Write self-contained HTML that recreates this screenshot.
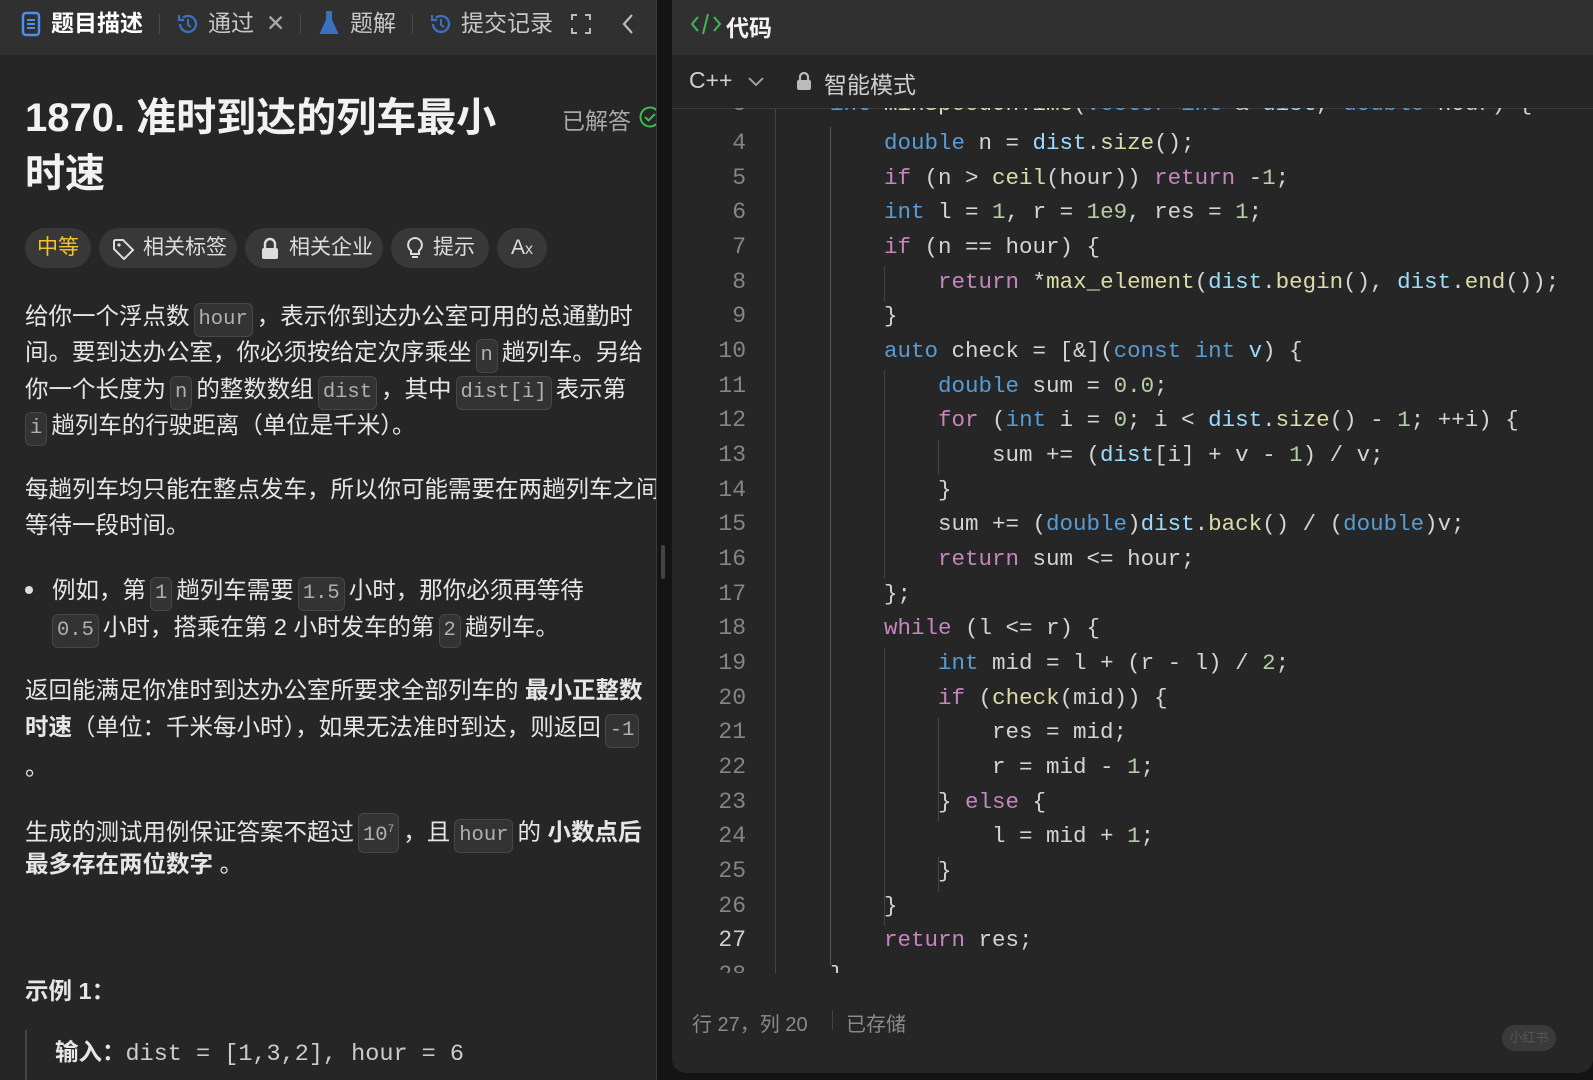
<!DOCTYPE html>
<html><head><meta charset="utf-8">
<style>
*{margin:0;padding:0;box-sizing:border-box}
body{width:1593px;height:1080px;background:#141414;overflow:hidden;position:relative;font-family:"Liberation Sans","Noto Sans CJK SC",sans-serif;color:#e8e8e8}
.abs{position:absolute;white-space:nowrap}
#left{position:absolute;left:0;top:0;width:657px;height:1080px;background:#262626;overflow:hidden;border-right:1px solid #3a3a3a}
#ltab{position:absolute;left:0;top:0;width:657px;height:55px;background:#303030}
.tab{position:absolute;top:9px;font-size:23px;color:#c8c8c8;line-height:28px}
.sep{position:absolute;top:14px;width:1px;height:20px;background:#4a4a4a}
.t{position:absolute;left:25px;font-size:23.5px;line-height:30px;color:#e6e6e6;white-space:nowrap}
.c{display:inline-block;font-family:"Liberation Mono",monospace;font-size:20.5px;color:#b0b0b0;background:#333;border:1px solid #474747;border-radius:6px;padding:0 4px;line-height:32px;margin:0 4px}
.pill{position:absolute;top:228px;height:40px;border-radius:20px;background:#383838;font-size:21px;color:#dcdcdc;line-height:40px;padding:0 14px;white-space:nowrap}
#right{position:absolute;left:672px;top:0;width:921px;height:1073px;background:#262626;border-radius:0 0 14px 14px;overflow:hidden}
#rtab{position:absolute;left:0;top:0;width:921px;height:55px;background:#303030}
#code{position:absolute;left:0;top:108px;width:921px;height:865px;overflow:hidden;border-top:1px solid #3a3a3a}
.ln{position:absolute;left:0;width:74px;text-align:right;font-family:"Liberation Mono",monospace;font-size:23px;color:#858585}
.cl{position:absolute;left:158px;font-family:"Liberation Mono",monospace;font-size:22.5px;color:#d4d4d4;white-space:pre}
.k{color:#569cd6}.p{color:#c586c0}.f{color:#dcdcaa}.n{color:#b5cea8}.v{color:#9cdcfe}
.g{position:absolute;width:1px;background:#444}
</style></head><body>
<div id="left">
 <div id="ltab">
  <svg class="abs" style="left:21px;top:11px" width="20" height="26" viewBox="0 0 20 26"><rect x="2" y="2" width="16" height="22" rx="3" fill="none" stroke="#4c8ff0" stroke-width="2.4"/><path d="M6 9h8M6 13h8M6 17h8" stroke="#4c8ff0" stroke-width="2"/></svg>
  <div class="tab" style="left:51px;color:#fff;font-weight:bold">题目描述</div>
  <div class="sep" style="left:159px"></div>
  <svg class="abs" style="left:175px;top:11px" width="26" height="26" viewBox="0 0 26 26"><path d="M5 13a8 8 0 1 0 3-6.3" fill="none" stroke="#3b6fc0" stroke-width="2.4"/><path d="M4 4v5h5" fill="none" stroke="#3b6fc0" stroke-width="2.2"/><path d="M13 8v6l3 2" fill="none" stroke="#3b6fc0" stroke-width="2"/></svg>
  <div class="tab" style="left:208px">通过</div>
  <div class="tab" style="left:266px;color:#aaa">✕</div>
  <div class="sep" style="left:300px"></div>
  <svg class="abs" style="left:318px;top:10px" width="22" height="26" viewBox="0 0 22 26"><path d="M8 2h6M9 2v8L3 23h16L13 10V2" fill="#3b6fc0" stroke="#3b6fc0" stroke-width="2"/></svg>
  <div class="tab" style="left:350px">题解</div>
  <div class="sep" style="left:412px"></div>
  <svg class="abs" style="left:428px;top:11px" width="26" height="26" viewBox="0 0 26 26"><path d="M5 13a8 8 0 1 0 3-6.3" fill="none" stroke="#3b6fc0" stroke-width="2.4"/><path d="M4 4v5h5" fill="none" stroke="#3b6fc0" stroke-width="2.2"/><path d="M13 8v6l3 2" fill="none" stroke="#3b6fc0" stroke-width="2"/></svg>
  <div class="tab" style="left:461px">提交记录</div>
  <svg class="abs" style="left:569px;top:12px" width="24" height="24" viewBox="0 0 24 24"><path d="M3 8V3h5M16 3h5v5M21 16v5h-5M8 21H3v-5" fill="none" stroke="#bbb" stroke-width="2"/></svg>
  <svg class="abs" style="left:619px;top:12px" width="18" height="24" viewBox="0 0 18 24"><path d="M13 3L5 12l8 9" fill="none" stroke="#bbb" stroke-width="2.2"/></svg>
 </div>
 <div class="abs" style="left:25px;top:94px;font-size:40px;font-weight:bold;color:#f2f2f2;line-height:48px">1870. 准时到达的列车最小</div>
 <div class="abs" style="left:25px;top:150px;font-size:40px;font-weight:bold;color:#f2f2f2;line-height:48px">时速</div>
 <div class="abs" style="left:562px;top:102px;font-size:23px;color:#a8a8a8">已解答</div>
 <svg class="abs" style="left:638px;top:105px" width="24" height="24" viewBox="0 0 24 24"><circle cx="12" cy="12" r="9.5" fill="none" stroke="#3fb950" stroke-width="2"/><path d="M7 12l3.5 3.5L17 9" fill="none" stroke="#3fb950" stroke-width="2"/></svg>
 <div class="pill" style="left:25px;width:66px;text-align:center;padding:0;color:#f4c430">中等</div>
 <div class="pill" style="left:99px;width:138px;padding-left:44px">相关标签<svg class="abs" style="left:12px;top:9px" width="24" height="24" viewBox="0 0 24 24"><path d="M3 4v8l10 10 9-9L12 3H4z" fill="none" stroke="#ddd" stroke-width="2"/><circle cx="8" cy="8" r="1.6" fill="#ddd"/></svg></div>
 <div class="pill" style="left:245px;width:138px;padding-left:44px">相关企业<svg class="abs" style="left:14px;top:9px" width="22" height="24" viewBox="0 0 22 24"><rect x="3" y="11" width="16" height="11" rx="2" fill="#ddd"/><path d="M6 11V7a5 5 0 0 1 10 0v4" fill="none" stroke="#ddd" stroke-width="2.4"/></svg></div>
 <div class="pill" style="left:391px;width:98px;padding-left:42px">提示<svg class="abs" style="left:14px;top:8px" width="20" height="26" viewBox="0 0 20 26"><path d="M10 2a7 7 0 0 0-4 12.7V18h8v-3.3A7 7 0 0 0 10 2z" fill="none" stroke="#ddd" stroke-width="2"/><path d="M7 21h6" stroke="#ddd" stroke-width="2"/></svg></div>
 <div class="pill" style="left:497px;width:50px;padding:0 0 0 14px">A<span style="font-size:16px">x</span></div>

 <div class="t" style="top:301px">给你一个浮点数<span class="c">hour</span>，表示你到达办公室可用的总通勤时</div>
 <div class="t" style="top:337px">间。要到达办公室，你必须按给定次序乘坐<span class="c">n</span>趟列车。另给</div>
 <div class="t" style="top:374px">你一个长度为<span class="c">n</span>的整数数组<span class="c">dist</span>，其中<span class="c">dist[i]</span>表示第</div>
 <div class="t" style="top:410px;left:21px"><span class="c">i</span>趟列车的行驶距离（单位是千米）。</div>
 <div class="t" style="top:474px">每趟列车均只能在整点发车，所以你可能需要在两趟列车之间</div>
 <div class="t" style="top:510px">等待一段时间。</div>
 <div class="abs" style="left:25px;top:586px;width:8px;height:8px;border-radius:4px;background:#ddd"></div>
 <div class="t" style="top:575px;left:52px">例如，第<span class="c">1</span>趟列车需要<span class="c">1.5</span>小时，那你必须再等待</div>
 <div class="t" style="top:612px;left:48px"><span class="c">0.5</span>小时，搭乘在第 2 小时发车的第<span class="c">2</span>趟列车。</div>
 <div class="t" style="top:675px">返回能满足你准时到达办公室所要求全部列车的 <b>最小正整数</b></div>
 <div class="t" style="top:712px"><b>时速</b>（单位：千米每小时），如果无法准时到达，则返回<span class="c">-1</span></div>
 <div class="t" style="top:752px">。</div>
 <div class="t" style="top:813px">生成的测试用例保证答案不超过<span class="c">10<sup style="font-size:11px">7</sup></span>，且<span class="c">hour</span>的 <b>小数点后</b></div>
 <div class="t" style="top:849px"><b>最多存在两位数字</b> 。</div>
 <div class="t" style="top:976px"><b>示例 1：</b></div>
 <div class="abs" style="left:25px;top:1030px;width:2px;height:50px;background:#444"></div>
 <div class="t" style="top:1037px;left:55px"><b>输入：</b><span style="font-family:'Liberation Mono',monospace;color:#ccc">dist = [1,3,2], hour = 6</span></div>
</div>
<div class="abs" style="left:661px;top:545px;width:4px;height:34px;border-radius:2px;background:#444"></div>

<div id="right">
 <div id="rtab">
  <svg class="abs" style="left:18px;top:12px" width="32" height="24" viewBox="0 0 32 24"><path d="M8 5L2 12l6 7M24 5l6 7-6 7M18 2l-5 20" fill="none" stroke="#3fb950" stroke-width="2"/></svg>
  <div class="abs" style="left:54px;top:9px;font-size:23px;font-weight:bold;color:#f2f2f2">代码</div>
 </div>
 <div class="abs" style="left:17px;top:67px;font-size:23px;color:#cfcfcf">C++</div>
 <svg class="abs" style="left:75px;top:75px" width="18" height="14" viewBox="0 0 18 14"><path d="M2 3l7 7 7-7" fill="none" stroke="#aaa" stroke-width="1.8"/></svg>
 <svg class="abs" style="left:124px;top:71px" width="16" height="20" viewBox="0 0 16 20"><rect x="1" y="9" width="14" height="10" rx="2" fill="#bbb"/><path d="M4 9V6a4 4 0 0 1 8 0v3" fill="none" stroke="#bbb" stroke-width="2.2"/></svg>
 <div class="abs" style="left:152px;top:66px;font-size:23px;color:#cfcfcf">智能模式</div>
 <div id="code">
  <div class="g" style="left:103px;top:0;height:865px"></div>
  <div class="g" style="left:158px;top:18px;height:838px;background:#555"></div>
  <div class="g" style="left:212px;top:157px;height:35px"></div>
  <div class="g" style="left:212px;top:261px;height:209px"></div>
  <div class="g" style="left:266px;top:331px;height:35px"></div>
  <div class="g" style="left:212px;top:539px;height:278px"></div>
  <div class="g" style="left:266px;top:609px;height:104px"></div>
  <div class="g" style="left:266px;top:748px;height:35px"></div>
 </div>
 <div id="lines" class="abs" style="left:0;top:108px;width:921px;height:865px;overflow:hidden">
  <div class="ln" style="top:-17px">3</div><div class="cl" style="top:-17px"><span class="k">int</span> <span class="f">minSpeedOnTime</span>(<span class="k">vector</span>&lt;<span class="k">int</span>&gt;&amp; <span class="v">dist</span>, <span class="k">double</span> hour) {</div>
  <div class="ln" style="top:22px">4</div><div class="cl" style="top:22px">    <span class="k">double</span> n = <span class="v">dist</span>.<span class="f">size</span>();</div>
  <div class="ln" style="top:57px">5</div><div class="cl" style="top:57px">    <span class="p">if</span> (n &gt; <span class="f">ceil</span>(hour)) <span class="p">return</span> -<span class="n">1</span>;</div>
  <div class="ln" style="top:91px">6</div><div class="cl" style="top:91px">    <span class="k">int</span> l = <span class="n">1</span>, r = <span class="n">1e9</span>, res = <span class="n">1</span>;</div>
  <div class="ln" style="top:126px">7</div><div class="cl" style="top:126px">    <span class="p">if</span> (n == hour) {</div>
  <div class="ln" style="top:161px">8</div><div class="cl" style="top:161px">        <span class="p">return</span> *<span class="f">max_element</span>(<span class="v">dist</span>.<span class="f">begin</span>(), <span class="v">dist</span>.<span class="f">end</span>());</div>
  <div class="ln" style="top:195px">9</div><div class="cl" style="top:195px">    }</div>
  <div class="ln" style="top:230px">10</div><div class="cl" style="top:230px">    <span class="k">auto</span> check = [&amp;](<span class="k">const</span> <span class="k">int</span> <span class="v">v</span>) {</div>
  <div class="ln" style="top:265px">11</div><div class="cl" style="top:265px">        <span class="k">double</span> sum = <span class="n">0.0</span>;</div>
  <div class="ln" style="top:299px">12</div><div class="cl" style="top:299px">        <span class="p">for</span> (<span class="k">int</span> i = <span class="n">0</span>; i &lt; <span class="v">dist</span>.<span class="f">size</span>() - <span class="n">1</span>; ++i) {</div>
  <div class="ln" style="top:334px">13</div><div class="cl" style="top:334px">            sum += (<span class="v">dist</span>[i] + v - <span class="n">1</span>) / v;</div>
  <div class="ln" style="top:369px">14</div><div class="cl" style="top:369px">        }</div>
  <div class="ln" style="top:403px">15</div><div class="cl" style="top:403px">        sum += (<span class="k">double</span>)<span class="v">dist</span>.<span class="f">back</span>() / (<span class="k">double</span>)v;</div>
  <div class="ln" style="top:438px">16</div><div class="cl" style="top:438px">        <span class="p">return</span> sum &lt;= hour;</div>
  <div class="ln" style="top:473px">17</div><div class="cl" style="top:473px">    };</div>
  <div class="ln" style="top:507px">18</div><div class="cl" style="top:507px">    <span class="p">while</span> (l &lt;= r) {</div>
  <div class="ln" style="top:542px">19</div><div class="cl" style="top:542px">        <span class="k">int</span> mid = l + (r - l) / <span class="n">2</span>;</div>
  <div class="ln" style="top:577px">20</div><div class="cl" style="top:577px">        <span class="p">if</span> (<span class="f">check</span>(mid)) {</div>
  <div class="ln" style="top:611px">21</div><div class="cl" style="top:611px">            res = mid;</div>
  <div class="ln" style="top:646px">22</div><div class="cl" style="top:646px">            r = mid - <span class="n">1</span>;</div>
  <div class="ln" style="top:681px">23</div><div class="cl" style="top:681px">        } <span class="p">else</span> {</div>
  <div class="ln" style="top:715px">24</div><div class="cl" style="top:715px">            l = mid + <span class="n">1</span>;</div>
  <div class="ln" style="top:750px">25</div><div class="cl" style="top:750px">        }</div>
  <div class="ln" style="top:785px">26</div><div class="cl" style="top:785px">    }</div>
  <div class="ln" style="top:819px;color:#d0d0d0">27</div><div class="cl" style="top:819px">    <span class="p">return</span> res;</div>
  <div class="ln" style="top:854px">28</div><div class="cl" style="top:854px">}</div>
 </div>
 <div class="abs" style="left:20px;top:1008px;font-size:20px;color:#8a8a8a">行 27，列 20</div>
 <div class="abs" style="left:160px;top:1010px;width:1px;height:20px;background:#444"></div>
 <div class="abs" style="left:174px;top:1008px;font-size:20px;color:#8a8a8a">已存储</div>
 <div class="abs" style="left:830px;top:1025px;width:54px;height:26px;border-radius:13px;background:#3a3a3a;color:#555;font-size:13px;line-height:26px;text-align:center">小红书</div>
</div>
</body></html>
